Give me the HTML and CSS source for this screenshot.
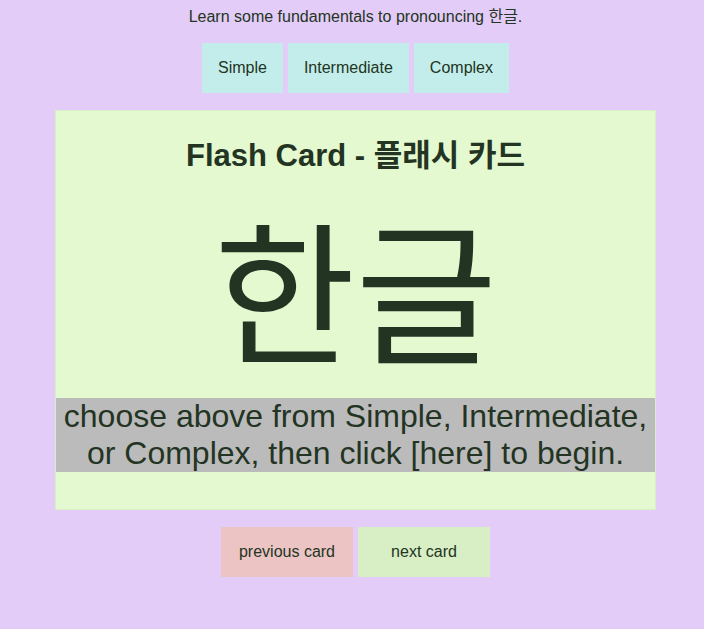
FILE: index.html
```html
<!DOCTYPE html>
<html lang="ko">
<head>
<meta charset="utf-8">
<title>Flash Card - 플래시 카드</title>
<link rel="stylesheet" href="styles.css">
</head>
<body>
<div class="page">
  <p class="intro">Learn some fundamentals to pronouncing 한글.</p>
  <div class="levels">
    <button class="level">Simple</button>
    <button class="level">Intermediate</button>
    <button class="level">Complex</button>
  </div>
  <section class="card">
    <h2 class="card-title">Flash Card - 플래시 카드</h2>
    <div class="card-word">한글</div>
    <div class="card-hint">choose above from Simple, Intermediate, or Complex, then click [here] to begin.</div>
  </section>
  <div class="nav">
    <button class="nav-btn prev">previous card</button>
    <button class="nav-btn next">next card</button>
  </div>
</div>
</body>
</html>
```

FILE: styles.css
```css
html, body {
  background: #e4ccf8;
}
body {
  margin: 8px;
  padding-left: 7px;
  font-family: "Liberation Sans", Arial, "Noto Sans CJK KR", sans-serif;
  color: #233423;
}
.page {
  display: flex;
  flex-direction: column;
  align-items: center;
}
.intro {
  margin: 0 0 16.5px;
  font-size: 16px;
  line-height: 18.4px;
}
.levels {
  display: flex;
  gap: 5px;
}
button {
  font-family: inherit;
  color: inherit;
  border: none;
  cursor: pointer;
  font-size: 16px;
}
.level {
  height: 50px;
  padding: 0 16px;
  background: #c2edea;
}
.card {
  box-sizing: border-box;
  width: 601px;
  height: 400px;
  margin-top: 17px;
  border: 1px solid #d6efc4;
  background: #e4f9d0;
  display: flex;
  flex-direction: column;
  align-items: stretch;
  text-align: center;
}
.card-title {
  margin: 28px 0 0;
  font-size: 31px;
  line-height: 34px;
  font-weight: bold;
  font-family: "Liberation Sans", Arial, "Noto Sans CJK KR", sans-serif;
}
.card-word {
  font-family: "Noto Sans CJK KR", sans-serif;
  font-size: 154px;
  line-height: 225px;
  height: 225px;
}
.card-hint {
  background: #bbbbbb;
  font-size: 32px;
  line-height: 37px;
  padding: 0 2px;
}
.nav {
  display: flex;
  gap: 5px;
  margin-top: 17px;
}
.nav-btn {
  width: 132px;
  height: 50px;
  padding: 0;
}
.prev {
  background: #ecc4c4;
}
.next {
  background: #d8eec4;
}
```
